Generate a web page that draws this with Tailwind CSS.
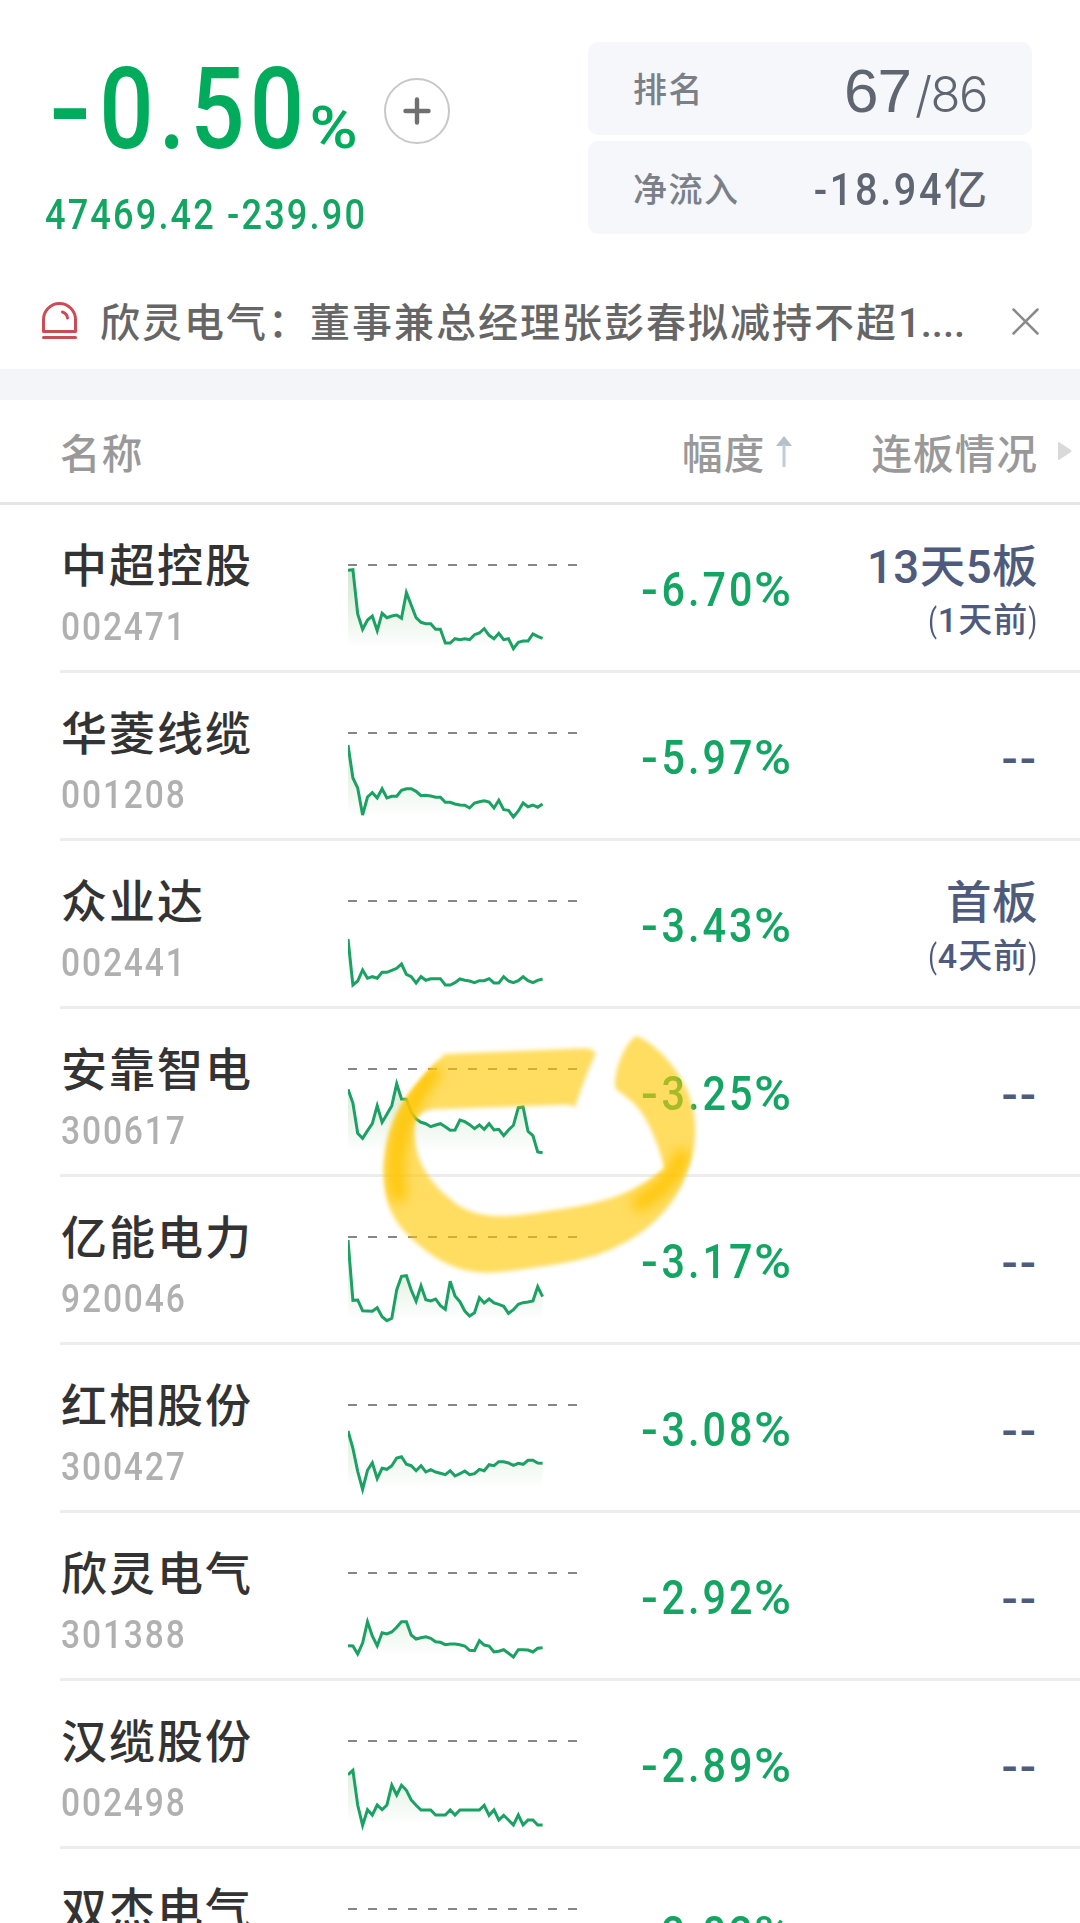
<!DOCTYPE html>
<html lang="zh-CN">
<head>
    <meta charset="UTF-8">
    <meta name="viewport" content="width=device-width, initial-scale=1.0">
    <title>板块行情</title>
    <script src="https://cdn.jsdelivr.net/npm/@tailwindcss/browser@4"></script>
</head>
<body class="bg-white font-[Roboto,'Noto_Sans_CJK_SC',sans-serif] font-medium">
    <div class="relative w-[1080px] h-[1923px] overflow-hidden">

        <!-- Sector summary -->
        <header class="flex justify-between h-[276px] pl-[45px] pr-12 pt-[42px]">
            <div>
                <div class="flex items-start h-[136px]">
                    <div class="w-[339px] pl-1 pt-0.5 whitespace-nowrap text-[#00ab5c] leading-[130px]">
                        <span class="inline-block origin-left scale-x-[.84] text-[114px] tracking-[6px]"><span class="inline-block mr-[15px] origin-left scale-x-[1.300]">-</span>0.50<span class="inline-block origin-left scale-x-[1.300] text-[60px]">%</span></span>
                    </div>
                    <svg class="w-[66px] h-[66px] mt-9" viewBox="0 0 66 66" fill="none">
                        <circle cx="33" cy="33" r="32" stroke="#c8c8c8" stroke-width="2" />
                        <path d="M33 21.500v23M21.500 33h23" stroke="#707070" stroke-width="4.400" stroke-linecap="round" />
                    </svg>
                </div>
                <div class="pt-px whitespace-nowrap text-[#14a562] text-[42px] leading-[72px]">
                    <span class="inline-block origin-left scale-x-[.86] tracking-[2.500px]">47469.42 -239.90</span>
                </div>
            </div>
            <div class="w-[444px] flex flex-col gap-1.5">
                <div class="flex items-center justify-between h-[93px] rounded-[10px] bg-[#f5f7fb] pt-1 pl-[45px] pr-[45px]">
                    <span class="text-[34px] tracking-[1.500px] text-[#7b8088]">排名</span>
                    <span class="flex items-baseline text-[#5f6672]">
                        <span class="font-['Liberation_Sans',sans-serif] font-normal text-[62px] tracking-[-1px] mr-1">67</span>
                        <span class="font-[Inter,sans-serif] font-light text-[49px] tracking-[-1.500px]">/86</span>
                    </span>
                </div>
                <div class="flex items-center justify-between h-[93px] rounded-[10px] bg-[#f5f7fb] pt-[5px] pl-[45px] pr-[45px]">
                    <span class="text-[34px] tracking-[1.500px] text-[#7b8088]">净流入</span>
                    <span class="flex items-center text-[#5f6672]">
                        <span class="inline-block origin-right scale-x-[.88] text-[45px] tracking-[3px]">-18.94</span>
                        <span class="text-[43px]">亿</span>
                    </span>
                </div>
            </div>
        </header>

        <!-- News strip -->
        <div class="flex items-center h-[93px] pl-[42px] pr-[41px]">
            <svg class="w-[35px] h-[37px] mb-1" viewBox="0 0 35 37" fill="none" stroke="#cb4c52" stroke-width="3" stroke-linecap="round" stroke-linejoin="round">
                <path d="M1.500 29.500V17.500a16 16 0 0 1 32 0v12zM1.500 35.500h32M20.500 10q4.500 1.500 5 6" />
            </svg>
            <p class="ml-[23px] pt-[3px] whitespace-nowrap text-[40px] tracking-[2px] text-[#666]">欣灵电气：董事兼总经理张彭春拟减持不超<span class="tracking-[0px]">1....</span></p>
            <svg class="ml-auto mb-[3px] w-[27px] h-[27px]" viewBox="0 0 27 27" stroke="#8a8a8a" stroke-width="2.500" stroke-linecap="round">
                <path d="M1.500 1.500l24 24M25.500 1.500l-24 24" />
            </svg>
        </div>
        <div class="h-[31px] bg-[#f3f5f9]"></div>

        <!-- Table head -->
        <div class="flex items-center h-[105px] pl-[60px] border-b-3 border-[#e6e6e6] text-[40.500px] tracking-[1.200px] text-[#999]">
            <span class="w-[622px] pt-[9px]">名称</span>
            <span class="pt-[9px]">幅度</span>
            <svg class="ml-[11px] w-4 h-[31px]" viewBox="0 0 16 31">
                <path d="M8 0l8 10H0z" fill="#b4c0ca" />
                <path d="M8 8v23" stroke="#c3ccd4" stroke-width="3" />
            </svg>
            <span class="ml-[79px] pt-[9px]">连板情况</span>
            <svg class="ml-auto mr-2 w-[15px] h-5" viewBox="0 0 15 20"><path d="M1 2v16q0 1 1 1l12-8q1-1 0-2L2 1q-1 0-1 1z" fill="#d9d9d9" /></svg>
        </div>

        <!-- Stock rows -->
        <div id="rows"></div>

        <!-- Highlighter mark -->
        <svg class="absolute left-[330px] top-[1020px] w-[400px] h-[320px]" viewBox="0 0 1200 960">
            <defs>
                <filter id="soft" filterUnits="userSpaceOnUse" x="0" y="0" width="1200" height="960"><feGaussianBlur stdDeviation="7" /></filter>
                <filter id="softer" filterUnits="userSpaceOnUse" x="0" y="0" width="1200" height="960"><feGaussianBlur stdDeviation="17" /></filter>
                <filter id="edge" filterUnits="userSpaceOnUse" x="0" y="0" width="1200" height="960"><feGaussianBlur stdDeviation="5" /></filter>
                <path id="ring" d="M345 102L765 85Q800 88 795 105C775 150 755 200 735 262Q715 250 690 255L310 268C265 272 250 300 254 350C260 450 330 520 400 565C470 600 550 590 660 572C780 555 900 535 1003 443C985 370 950 290 920 260C900 235 870 220 856 205C850 160 880 70 920 47C990 80 1060 160 1085 250C1105 320 1095 400 1070 460C1020 600 900 670 800 705C700 735 600 745 500 757C400 765 330 730 260 670C180 600 160 540 160 440C165 350 190 280 240 215C270 180 290 150 345 102Z" />
                <mask id="inside" maskUnits="userSpaceOnUse" x="0" y="0" width="1200" height="960"><use href="#ring" fill="#fff" filter="url(#edge)" /></mask>
            </defs>
            <use href="#ring" fill="#ffc800" fill-opacity=".62" filter="url(#soft)" />
            <g mask="url(#inside)" fill="none" stroke="#ffc400" stroke-linecap="round">
                <path d="M305 160C250 230 210 300 200 410C194 460 196 490 205 520" stroke-width="54" stroke-opacity=".85" filter="url(#softer)" />
                <path d="M1055 410C1040 450 1020 490 930 550" stroke-width="50" stroke-opacity=".85" filter="url(#softer)" />
            </g>
        </svg>
    </div>

    <script>
        // trend: distance below the previous-close line, in thirds of a pixel
        const stocks = [
            { name: '中超控股', code: '002471', pct: '-6.70%', board: '13天5板', ago: '1天前', zero: 75,
              trend: [91,89,222,268,240,228,272,220,233,228,225,235,158,195,233,247,251,251,268,268,309,309,296,299,296,299,284,279,266,286,296,280,299,296,326,307,303,303,282,289,295] },
            { name: '华菱线缆', code: '001208', pct: '-5.97%', zero: 579,
              trend: [615,714,744,825,771,758,774,746,774,769,769,751,746,746,754,767,766,768,772,772,787,787,792,795,796,804,789,785,782,786,804,781,809,811,831,813,789,800,795,802,792] },
            { name: '众业达', code: '002441', pct: '-3.43%', board: '首板', ago: '4天前', zero: 63,
              trend: [177,315,303,270,295,290,295,277,277,271,265,252,283,290,309,290,301,296,296,296,315,315,308,297,301,303,308,302,302,296,309,309,290,303,308,302,290,302,308,301,297] },
            { name: '安靠智电', code: '300617', pct: '-3.25%', zero: 567,
              trend: [628,669,760,775,752,731,677,727,703,677,611,657,658,697,717,727,731,740,735,731,740,751,750,720,725,734,746,735,748,731,750,748,767,750,736,683,681,754,767,816,818] },
            { name: '亿能电力', code: '920046', pct: '-3.17%', zero: 651,
              trend: [660,841,840,872,873,874,863,890,902,895,810,769,767,810,844,797,839,843,837,857,868,784,828,845,873,888,878,833,849,837,849,853,859,880,869,853,848,846,843,800,830] },
            { name: '红相股份', code: '300427', pct: '-3.08%', zero: 75,
              trend: [153,205,274,328,271,248,296,265,268,257,234,230,253,257,272,257,276,269,276,280,284,272,288,281,273,284,281,268,272,254,257,245,245,249,256,250,253,241,241,249,250] },
            { name: '欣灵电气', code: '301388', pct: '-2.92%', zero: 579,
              trend: [797,798,822,789,725,768,797,758,762,756,742,725,725,765,777,773,770,775,785,787,794,792,792,794,798,811,812,782,795,798,816,814,809,820,831,809,809,810,816,805,803] },
            { name: '汉缆股份', code: '002498', pct: '-2.89%', zero: 93,
              trend: [194,181,285,346,299,315,285,299,285,225,255,226,241,270,286,300,300,300,315,315,315,300,315,300,300,300,300,300,286,316,300,330,316,330,345,315,345,330,330,345,345] },
            { name: '双杰电气', code: '300444', pct: '-2.82%', zero: 0, trend: [] },
        ];

        function sparkline(stock) {
            const pts = stock.trend.map((v, i) => `${(i * 4.865).toFixed(1)},${(1 + (v - stock.zero) / 3).toFixed(1)}`);
            const lines = pts.length ? `
                <polygon points="0,82 ${pts.join(' ')} 194.6,82" fill="url(#fade)" clip-path="url(#base)" />
                <polyline points="${pts.join(' ')}" fill="none" stroke="#1ba163" stroke-width="3" />` : '';
            return `
                <svg class="w-[230px] h-[100px] mt-[59px]" viewBox="0 0 230 100">
                    <defs>
                        <linearGradient id="fade" gradientUnits="userSpaceOnUse" x1="0" y1="0" x2="0" y2="82">
                            <stop offset="0" stop-color="#3d9f3d" stop-opacity=".26" />
                            <stop offset="1" stop-color="#3d9f3d" stop-opacity=".01" />
                        </linearGradient>
                        <clipPath id="base"><path d="M0 0h195v82H0z" /></clipPath>
                    </defs>
                    <path d="M0 1h230" stroke="#868686" stroke-width="2" stroke-dasharray="9 11" />
                    ${lines}
                </svg>`;
        }

        document.getElementById('rows').innerHTML = stocks.map(s => `
            <div class="flex h-[168px] ml-[60px] pr-11 border-b-3 border-[#ededed]">
                <div class="w-[288px] pt-[31px] pl-px whitespace-nowrap">
                    <div class="text-[46px] leading-[60px] tracking-[2px] text-[#333]">${s.name}</div>
                    <div class="-mt-px origin-left scale-x-[.86] text-[39px] leading-[64px] tracking-[2.200px] text-[#b0b0b0]">${s.code}</div>
                </div>
                ${sparkline(s)}
                <div class="w-[217px] pt-[55px] text-right whitespace-nowrap text-[48px] leading-[60px] text-[#14a562]">
                    <span class="inline-block origin-right scale-x-[.86] tracking-[3.500px]"><span class="inline-block origin-right scale-x-[1.200]">-</span>${s.pct.slice(1, -1)}<span class="inline-block ml-[7px] origin-right scale-x-[1.220]">%</span></span>
                </div>
                <div class="ml-auto text-right whitespace-nowrap text-[#4f5b7c]">
                    ${s.board ? `
                    <div class="pt-[33px] -mr-0.5 text-[45.500px] leading-[60px] tracking-[.500px]">${s.board}</div>
                    <div class="-mr-0.5 -mt-px text-[34px] leading-[46px] tracking-[1px]"><span class="inline-block origin-right scale-x-75 font-normal">(</span>${s.ago}<span class="inline-block -ml-[3px] origin-right scale-x-75 font-normal">)</span></div>` : `
                    <div class="pt-[56px] -mr-0.5 text-[48px] leading-[60px] tracking-[2px]">--</div>`}
                </div>
            </div>`).join('');
    </script>
</body>
</html>
